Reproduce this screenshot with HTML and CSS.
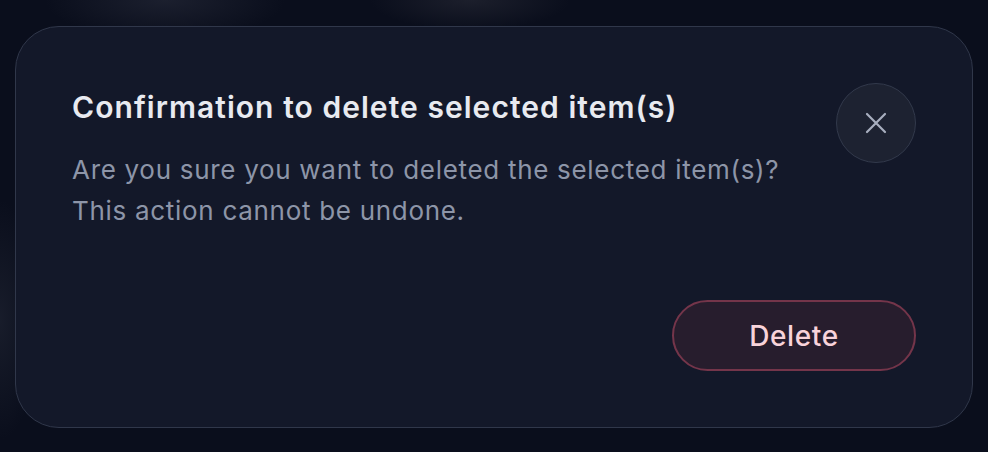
FILE: index.html
```html
<!DOCTYPE html>
<html>
    <head>
        <meta charset="UTF-8">
        <title>Delete</title>
        <link rel="stylesheet" href="styles.css">
    </head>
    <body>
        <div class="dialog">
            <div class="dialog_head">
                <div class="dialog_text">
                    <h2 class="dialog_title">Confirmation to delete selected item(s)</h2>
                    <p class="dialog_desc">Are you sure you want to deleted the selected item(s)?<br>This action cannot be undone.</p>
                </div>
                <button class="close_btn" aria-label="close">
                    <svg width="22" height="22" viewBox="0 0 22 22">
                        <path d="M2 2 L20 20 M20 2 L2 20" stroke="#a8afbf" stroke-width="2.2" stroke-linecap="round" fill="none"/>
                    </svg>
                </button>
            </div>
            <div class="dialog_foot">
                <button class="delete_btn">Delete</button>
            </div>
        </div>
    </body>
</html>
```

FILE: styles.css
```css
html,body{
    margin: 0;
    padding: 0;
}
body{
    width: 988px;
    height: 452px;
    box-sizing: border-box;
    padding: 26px 15px 24px 15px;
    background: #0a0e1c;
    background-image: radial-gradient(ellipse 120px 40px at 165px 0, rgba(60,64,80,0.35), transparent),
        radial-gradient(ellipse 100px 30px at 470px 0, rgba(70,70,80,0.3), transparent),
        radial-gradient(ellipse 40px 120px at 0 320px, rgba(50,55,70,0.35), transparent);
    font-family: "Inter", "Liberation Sans", sans-serif;
}
.dialog{
    height: 402px;
    box-sizing: border-box;
    border: 1px solid #30374a;
    border-radius: 44px;
    background: #131829;
    padding: 56px;
    display: flex;
    flex-direction: column;
}
.dialog_head{
    display: flex;
    justify-content: space-between;
    align-items: flex-start;
}
.dialog_title{
    margin: 6px 0 0 0;
    font-size: 30px;
    line-height: 36px;
    font-weight: 600;
    color: #e8eaf0;
    letter-spacing: 1.05px;
}
.dialog_desc{
    margin: 24px 0 0 0;
    font-size: 26px;
    line-height: 41px;
    font-weight: 400;
    color: #8d95a8;
    letter-spacing: 0.7px;
}
.close_btn{
    width: 80px;
    height: 80px;
    flex: none;
    border-radius: 50%;
    border: 1.5px solid #32394b;
    background: #1d2231;
    display: flex;
    align-items: center;
    justify-content: center;
    padding: 0;
    cursor: pointer;
}
.dialog_foot{
    margin-top: auto;
    display: flex;
    justify-content: flex-end;
}
.delete_btn{
    width: 244px;
    height: 71px;
    border-radius: 36px;
    border: 2px solid #74354a;
    background: #271d2d;
    color: #f8d3da;
    font-family: "Inter", "Liberation Sans", sans-serif;
    font-size: 28px;
    font-weight: 500;
    letter-spacing: 0.6px;
    cursor: pointer;
}
```
